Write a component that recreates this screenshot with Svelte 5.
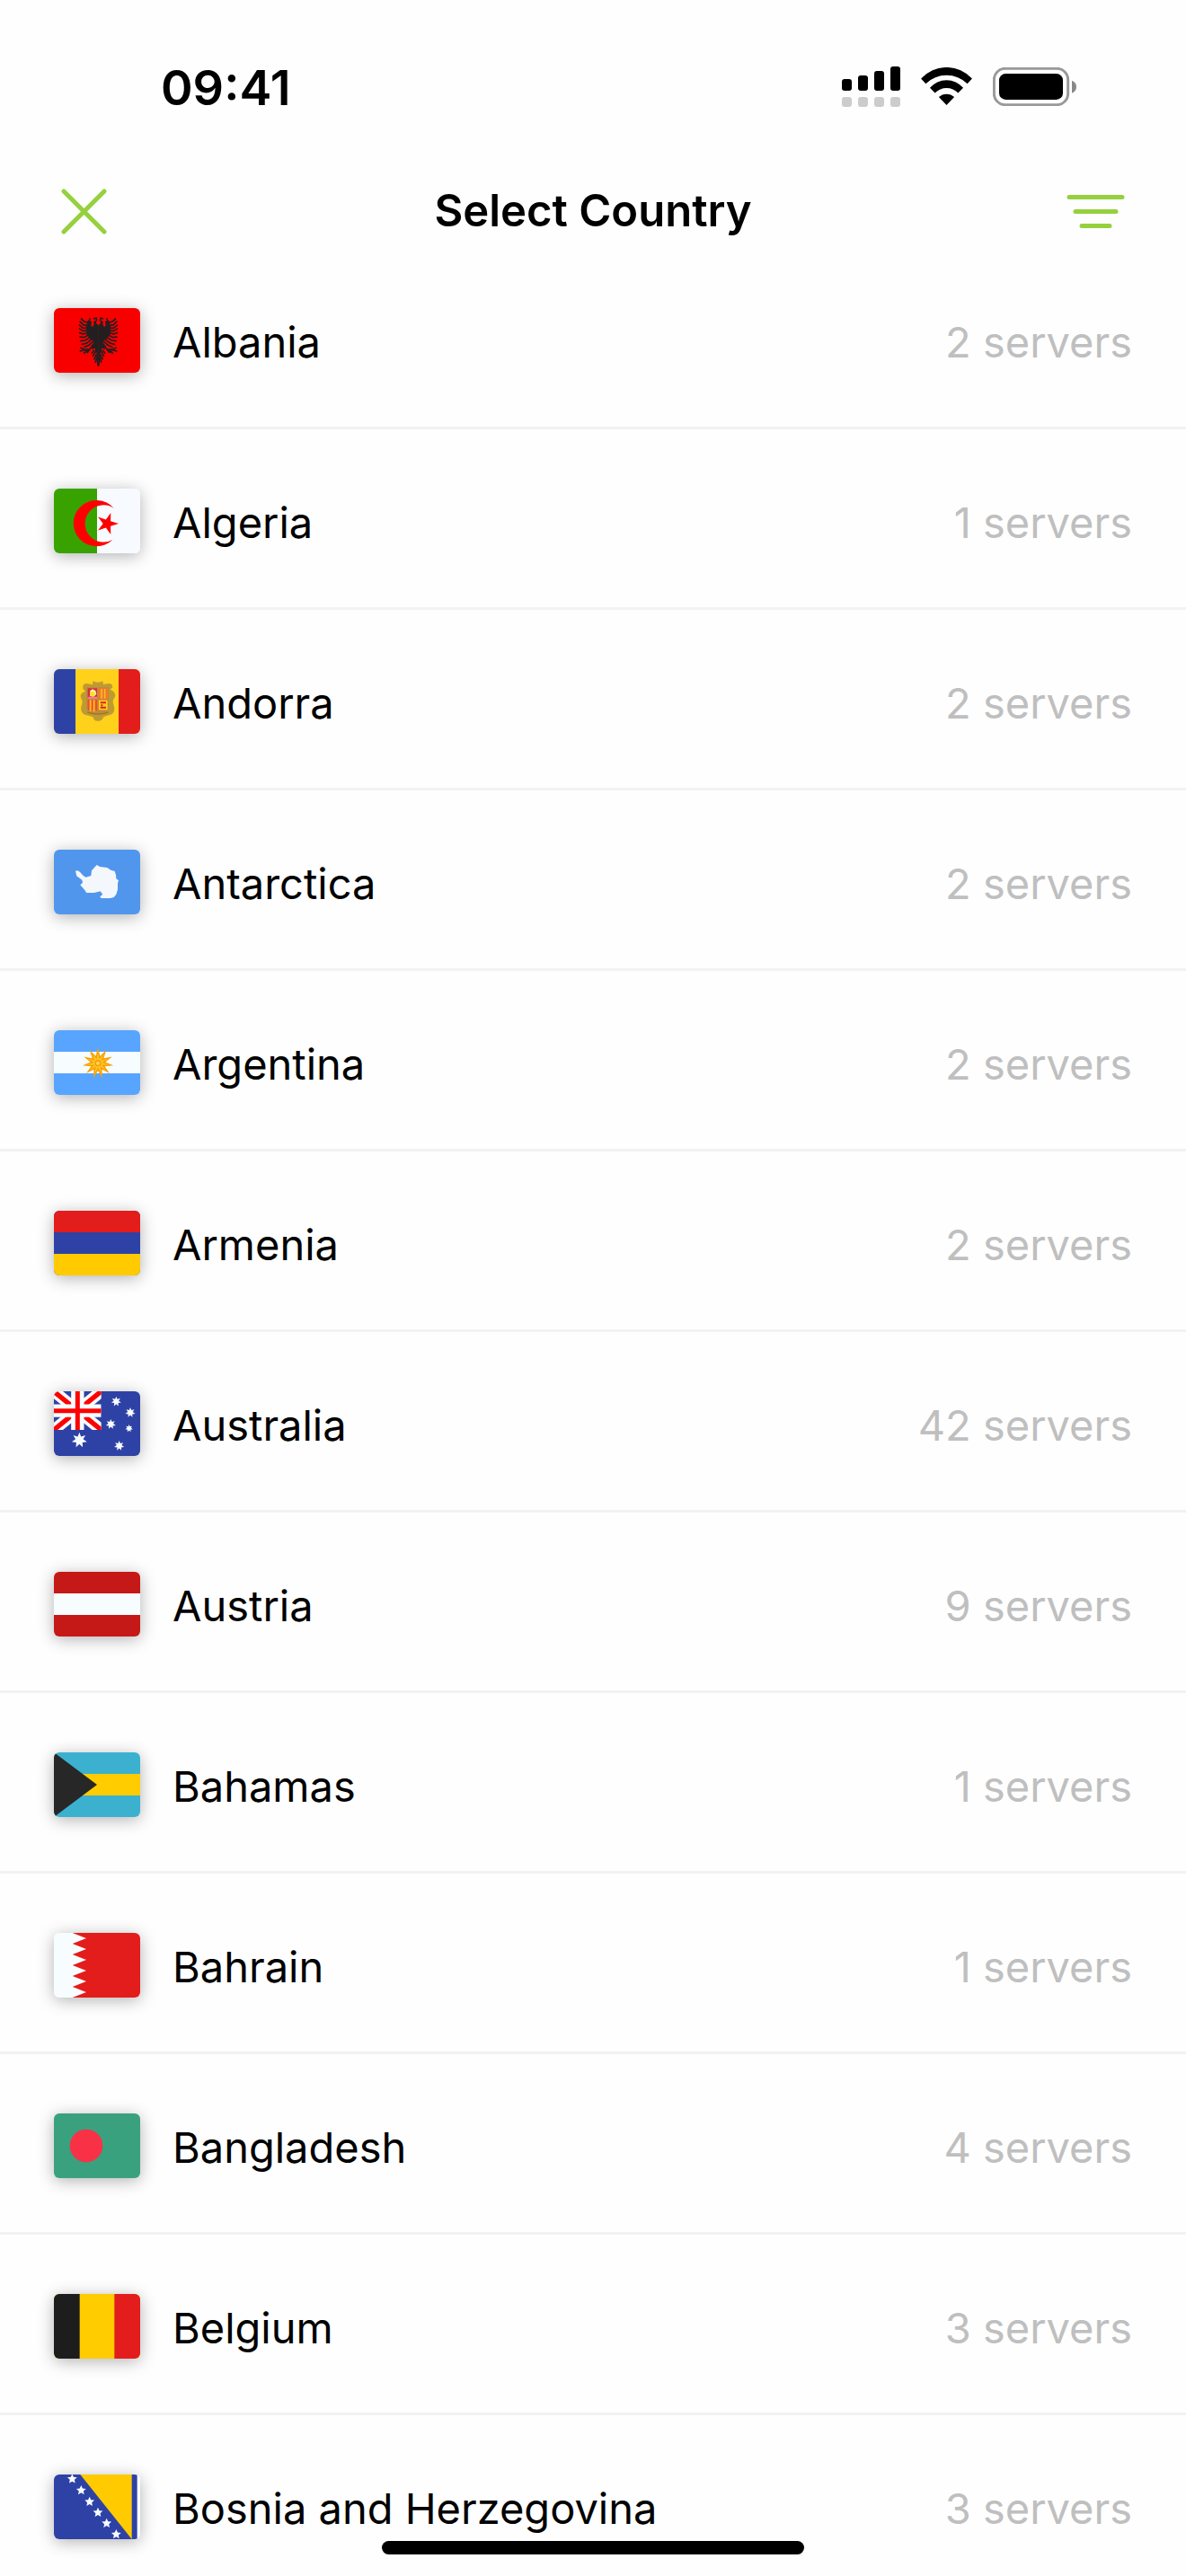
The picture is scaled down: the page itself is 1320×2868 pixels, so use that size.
<script>
  let selected = $state('')

  const countries = [
    { code: 'al', name: 'Albania', servers: 2 },
    { code: 'dz', name: 'Algeria', servers: 1 },
    { code: 'ad', name: 'Andorra', servers: 2 },
    { code: 'aq', name: 'Antarctica', servers: 2 },
    { code: 'ar', name: 'Argentina', servers: 2 },
    { code: 'am', name: 'Armenia', servers: 2 },
    { code: 'au', name: 'Australia', servers: 42 },
    { code: 'at', name: 'Austria', servers: 9 },
    { code: 'bs', name: 'Bahamas', servers: 1 },
    { code: 'bh', name: 'Bahrain', servers: 1 },
    { code: 'bd', name: 'Bangladesh', servers: 4 },
    { code: 'be', name: 'Belgium', servers: 3 },
    { code: 'ba', name: 'Bosnia and Herzegovina', servers: 3 },
  ]

  const southernCross = [[208, 34, 17], [255, 71, 17], [190, 110, 17], [251, 124, 13], [218, 182, 17], [85, 163, 26]]
  const bosnianStars = [[61, 15], [91, 53], [119, 91], [147, 127], [176, 163], [208, 200]]

  // polygon points of an n-pointed star, first point straight up unless turned
  function star(cx, cy, n, outer, inner, turn = 0) {
    const pts = []
    for (let i = 0; i < n * 2; i++) {
      const r = i % 2 ? inner : outer
      const a = (Math.PI * i) / n - Math.PI / 2 + turn
      pts.push(`${(cx + r * Math.cos(a)).toFixed(1)},${(cy + r * Math.sin(a)).toFixed(1)}`)
    }
    return pts.join(' ')
  }
</script>

{#snippet eagleHalf()}
  <path d="M149 58 L141 50 L143 43 L138 41 L132 47 L134 53 L129 64 L124 58 L126 46 L118 39 L112 43 L108 62 L109 88 L120 102 L134 112 L128 122 L126 138 L138 134 L136 150 L142 148 L142 168 L145 192 L149 196 Z" />
  <path
    d="M122 38 L118 34 M132 36 L141 33 L143 42 M112 48 L100 44 L90 34 M110 58 L98 56 L86 44 M110 66 L98 67 L84 56
       M110 74 L98 77 L84 68 M111 82 L98 87 L84 82 M114 91 L100 98 L85 96 M120 98 L104 108 L88 110 M126 104 L110 117 L92 122
       M132 110 L117 124 L100 131 M129 124 L118 140 L110 150 M120 138 L100 138 L88 132 M106 139 L86 144 M112 140 L100 152
       M134 140 L126 152 M138 146 L130 162 M142 154 L134 172 M144 164 L138 182"
    fill="none" stroke="#231f20" stroke-width="5" />
{/snippet}

{#snippet flag(code)}
  <svg class="flag" viewBox="0 0 288 216" aria-hidden="true">
    {#if code === 'al'}
      <rect width="288" height="216" fill="#f90000" />
      <g fill="#231f20">
        {@render eagleHalf()}
        <g transform="translate(297 0) scale(-1 1)">{@render eagleHalf()}</g>
      </g>
    {:else if code === 'dz'}
      <rect width="288" height="216" fill="#f7faff" />
      <rect width="144" height="216" fill="#38a300" />
      <path d="M200 65 A77 77 0 1 0 196 171 A62 62 0 1 1 200 65 Z" fill="#ff0000" />
      <polygon points={star(178, 117, 5, 38, 14, Math.PI / 2)} fill="#ff0000" />
    {:else if code === 'ad'}
      <rect width="288" height="216" fill="#ffd11a" />
      <rect width="72" height="216" fill="#2e42a5" />
      <rect x="216" width="72" height="216" fill="#e31d1c" />
      <path d="M130 40 Q147 48 163 40 L165 51 L176 49 Q196 44 196 61 L188 68 Q206 74 205 91 L200 99 Q194 108 200 121 Q206 142 193 151 L166 159 Q161 174 147 173 Q133 174 130 159 L103 152 Q88 146 91 125 Q98 110 92 100 Q82 82 105 74 L97 66 Q94 45 115 49 L129 52 Z" fill="#be9a32" />
      <path d="M109 60 H183 V132 Q178 146 147 148 Q116 146 109 132 Z" fill="#c5873b" />
      <rect x="113" y="64" width="31" height="31" fill="#d32f3b" />
      <path d="M121 72 L129 67 L139 72 L142 83 L133 92 L120 90 Z" fill="#fff2a0" />
      <circle cx="129" cy="83" r="8" fill="#ffe11a" />
      <path d="M115 95 H144" stroke="#f07aa8" stroke-width="6" />
      <rect x="150" y="64" width="31" height="35" fill="#ef7b24" />
      <path d="M159 66 V98 M170 66 V98" stroke="#ffb72a" stroke-width="5" />
      <rect x="113" y="102" width="31" height="36" fill="#e8502b" />
      <path d="M122 103 V140 M134 103 V142" stroke="#ffba24" stroke-width="6" />
      <rect x="150" y="104" width="29" height="32" fill="#ffd11a" />
      <path d="M155 112 H174 M155 128 H174 M160 118 V124" stroke="#e31d1c" stroke-width="6" />
      <path d="M112 144 Q147 156 182 144" stroke="#9c7a24" stroke-width="4" fill="none" />
    {:else if code === 'aq'}
      <rect width="288" height="216" fill="#5196ed" />
      <path d="M72 71 Q80 67 88 76 L98 87 L107 92 L124 87 L126 70 L135 60 L143 51 L154 57 L178 60 L190 68 L203 72 L207 84 L208 97 L216 103 L213 112 L213 133 L208 149 L200 159 L188 162 L158 162 L154 157 L163 149 L155 139 L134 144 L109 144 L103 135 L96 127 L88 118 L96 110 L94 101 L76 88 Z" fill="#f4f8fc" />
    {:else if code === 'ar'}
      <rect width="288" height="216" fill="#58a5ff" />
      <rect y="72" width="288" height="72" fill="#f7fcff" />
      <polygon points={star(147, 110, 11, 52, 25)} fill="#f7a000" />
      <polygon points={star(147, 110, 11, 38, 13)} fill="#ffc62c" />
      <circle cx="147" cy="110" r="11" fill="#f7a000" />
      <circle cx="147" cy="110" r="6" fill="#ffd35a" />
    {:else if code === 'am'}
      <rect width="288" height="216" fill="#2e42a5" />
      <rect width="288" height="72" fill="#e31d1c" />
      <rect y="144" width="288" height="72" fill="#ffca00" />
    {:else if code === 'au'}
      <rect width="288" height="216" fill="#2e42a5" />
      <svg width="158" height="129" viewBox="0 0 158 129">
        <path d="M0 0 L158 129 M158 0 L0 129" stroke="#f7fcff" stroke-width="38" />
        <path d="M4 4 L158 129 M158 0 L0 129" stroke="#ff0000" stroke-width="16" />
        <path d="M79 0 V129 M0 65 H158" stroke="#f7fcff" stroke-width="43" />
        <path d="M79 0 V129 M0 65 H158" stroke="#ff0000" stroke-width="15" />
      </svg>
      {#each southernCross as [x, y, r]}
        <polygon points={star(x, y, 7, r, r / 2)} fill="#f7fcff" />
      {/each}
    {:else if code === 'at'}
      <rect width="288" height="216" fill="#c51918" />
      <rect y="72" width="288" height="72" fill="#f7fcff" />
    {:else if code === 'bs'}
      <rect width="288" height="216" fill="#3cb1cf" />
      <rect y="72" width="288" height="72" fill="#ffcc00" />
      <path d="M0 0 L144 108 L0 216 Z" fill="#272727" />
    {:else if code === 'bh'}
      <rect width="288" height="216" fill="#f7fcff" />
      <path d="M288 0 H62 L108 18 L62 36 L108 54 L62 72 L108 90 L62 108 L108 126 L62 144 L108 162 L62 180 L108 198 L62 216 H288 Z" fill="#e31d1c" />
    {:else if code === 'bd'}
      <rect width="288" height="216" fill="#3aa17e" />
      <circle cx="108" cy="108" r="55" fill="#f93147" />
    {:else if code === 'be'}
      <rect width="288" height="216" fill="#ffcc00" />
      <rect width="86" height="216" fill="#1d1d1d" />
      <rect x="202" width="86" height="216" fill="#e31d1c" />
    {:else if code === 'ba'}
      <rect width="288" height="216" fill="#f7fcff" />
      <rect width="278" height="216" fill="#2e42a5" />
      <path d="M88 0 H260 V216 Z" fill="#ffca00" />
      {#each bosnianStars as [x, y]}
        <polygon points={star(x, y, 5, 17, 8)} fill="#f7fcff" />
      {/each}
    {/if}
  </svg>
{/snippet}

<main class="screen">
  <div class="status-bar">
    <time>09:41</time>
    <div class="indicators">
      <svg width="65" height="45" viewBox="0 0 65 45" aria-label="Signal">
        <rect x="0" y="14" width="11" height="13" rx="3" />
        <rect x="18" y="10" width="11" height="17" rx="3" />
        <rect x="36" y="5" width="11" height="22" rx="3" />
        <rect x="54" y="0" width="11" height="27" rx="3" />
        {#each [0, 18, 36, 54] as x}
          <rect {x} y="34" width="11" height="11" rx="3" fill="#ccc" />
        {/each}
      </svg>
      <svg width="57" height="42" viewBox="0 0 172 127" aria-label="Wi-Fi">
        <path d="M0 38 A116 116 0 0 1 172 38 L156 55 A101 101 0 0 0 16 55 Z" />
        <path d="M30 69 A73 73 0 0 1 142 69 L125 86 A55 55 0 0 0 47 86 Z" />
        <path d="M60 100 A38 38 0 0 1 112 100 L86 127 Z" />
      </svg>
      <svg width="93" height="43" viewBox="0 0 279 129" aria-label="Battery">
        <rect x="4" y="4" width="247" height="121" rx="37" fill="none" stroke="#999" stroke-width="9" />
        <rect x="21" y="21" width="213" height="87" rx="22" />
        <path d="M264 44 Q279 50 279 65 Q279 80 264 86 Z" fill="#888" />
      </svg>
    </div>
  </div>

  <header>
    <button class="icon-btn" aria-label="Close">
      <svg width="51" height="51" viewBox="0 0 51 51">
        <path d="M3 3 L48 48 M48 3 L3 48" />
      </svg>
    </button>
    <h1>Select Country</h1>
    <button class="icon-btn" aria-label="Sort">
      <svg width="65" height="37" viewBox="0 0 65 37">
        <path d="M3 2.5 H62 M10 18.5 H55 M17 34.5 H48" />
      </svg>
    </button>
  </header>

  <ul>
    {#each countries as country (country.code)}
      <li>
        <button class="row" aria-pressed={selected === country.code} onclick={() => (selected = country.code)}>
          {@render flag(country.code)}
          <span class="name">{country.name}</span>
          <span class="servers">{country.servers} servers</span>
        </button>
      </li>
    {/each}
  </ul>

  <div class="home-indicator"></div>
</main>

<style>
  :global(body) { margin: 0; background: #fefefe; }

  .screen {
    position: relative;
    height: 100vh;
    overflow: hidden;
    display: flex;
    flex-direction: column;
    background: #fefefe;
    color: #000;
    font-family: Inter, "Liberation Sans", sans-serif;
  }

  .status-bar {
    flex: none;
    display: flex;
    align-items: center;
    justify-content: space-between;
    padding: 66px 122px 0 179px;
    height: 64px;
  }
  time { font-size: 54px; font-weight: 600; line-height: 64px; }
  .indicators { display: flex; align-items: center; gap: 23px; padding-bottom: 4px; }

  header {
    flex: none;
    display: grid;
    grid-template-columns: 1fr auto 1fr;
    align-items: center;
    height: 84px;
    padding: 63px 68px 0;
  }
  h1 {
    margin: 0;
    font-size: 49px;
    font-weight: 600;
    line-height: 60px;
  }

  button {
    border: none;
    background: transparent;
    color: inherit;
    font: inherit;
    cursor: pointer;
  }
  .icon-btn { display: flex; justify-self: start; padding: 0; }
  .icon-btn:last-child { justify-self: end; }
  .icon-btn path {
    fill: none;
    stroke: #96d03f;
    stroke-width: 5;
    stroke-linecap: round;
  }

  ul {
    flex: 1;
    min-height: 0;
    overflow: hidden;
    margin: 0;
    padding: 0;
    list-style: none;
  }
  li { border-bottom: 3px solid #f2f2f2; }

  .row {
    display: flex;
    align-items: center;
    width: 100%;
    padding: 66px 60px 60px;
    text-align: left;
    font-size: 47px;
    line-height: 68px;
  }

  .flag {
    flex: none;
    width: 96px;
    height: 72px;
    border-radius: 6px;
    box-shadow: 0 3px 18px rgba(0, 0, 0, 0.3);
  }

  .name, .servers { padding-top: 4px; }
  .name { flex: 1; margin-left: 36px; }
  .servers { color: #bfbfbf; }

  .home-indicator {
    position: absolute;
    bottom: 24px;
    left: 50%;
    width: 470px;
    height: 15px;
    border-radius: 8px;
    background: #000;
    transform: translateX(-50%);
  }
</style>
